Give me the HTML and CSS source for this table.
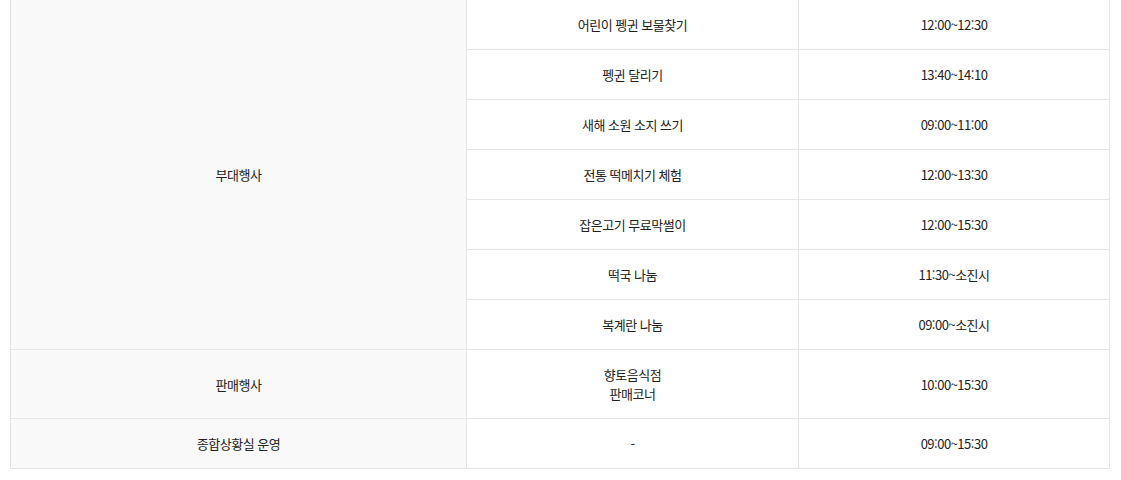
FILE: index.html
```html
<!DOCTYPE html>
<html lang="ko">
<head>
<meta charset="utf-8">
<link rel="stylesheet" href="styles.css">
</head>
<body>
<div class="wrap">
<table class="sched">
  <colgroup>
    <col class="c1"><col class="c2"><col class="c3">
  </colgroup>
  <tbody>
    <tr class="first">
      <th rowspan="7">부대행사</th>
      <td>어린이 펭귄 보물찾기</td>
      <td>12:00~12:30</td>
    </tr>
    <tr><td>펭귄 달리기</td><td>13:40~14:10</td></tr>
    <tr><td>새해 소원 소지 쓰기</td><td>09:00~11:00</td></tr>
    <tr><td>전통 떡메치기 체험</td><td>12:00~13:30</td></tr>
    <tr><td>잡은고기 무료막썰이</td><td>12:00~15:30</td></tr>
    <tr><td>떡국 나눔</td><td>11:30~소진시</td></tr>
    <tr><td>복계란 나눔</td><td>09:00~소진시</td></tr>
    <tr>
      <th>판매행사</th>
      <td>향토음식점<br>판매코너</td>
      <td>10:00~15:30</td>
    </tr>
    <tr>
      <th>종합상황실 운영</th>
      <td>-</td>
      <td>09:00~15:30</td>
    </tr>
  </tbody>
</table>
</div>
</body>
</html>
```
FILE: styles.css
```css
html, body {
  margin: 0;
  padding: 0;
  background: #fff;
}
.wrap {
  padding: 0 12px 0 10px;
  margin-top: -1px;
}
.sched {
  width: 1099px;
  border-collapse: collapse;
  table-layout: fixed;
  font-family: "Noto Sans CJK KR", "Noto Sans", sans-serif;
  font-size: 13px;
  line-height: 19px;
  letter-spacing: -0.5px;
  color: #222;
}
.c1 { width: 456px; }
.c2 { width: 332px; }
.c3 { width: 311px; }
.sched th, .sched td {
  border: 1px solid #e5e5e5;
  padding: 15px 0;
  text-align: center;
  vertical-align: middle;
  font-weight: 400;
}
.sched th {
  background: #f9f9f9;
}
```
